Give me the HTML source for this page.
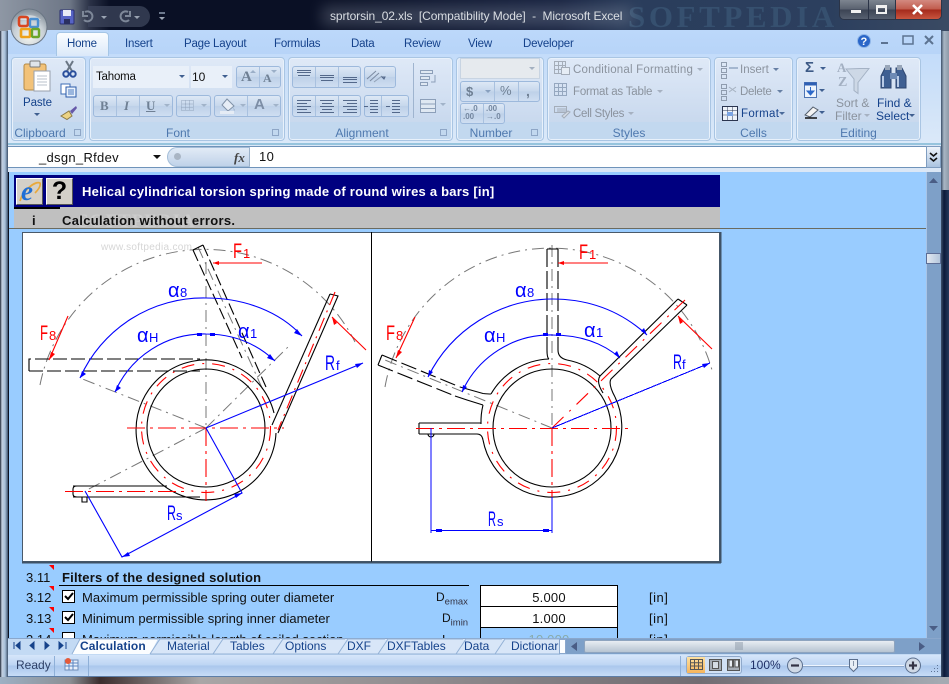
<!DOCTYPE html>
<html><head><meta charset="utf-8"><style>
html,body{margin:0;padding:0;background:#1a2233}
#w{position:relative;width:949px;height:684px;overflow:hidden;font-family:"Liberation Sans",sans-serif;font-size:12px;color:#15428b;background:#0b1122}
.a{position:absolute}
.t{position:absolute;white-space:nowrap;line-height:14px}
.g{position:absolute;top:57px;height:84px;border:1px solid #a9c5e3;border-radius:4px;box-sizing:border-box;background:linear-gradient(#dfe9f7,#c9d9ee 78%,#c2d8ef 78%,#c2d8ef);box-shadow:inset 0 0 0 1px #e8f1fb}
.gl{position:absolute;top:126px;color:#4e78ae;font-size:12px;text-align:center;line-height:14px}
.b{position:absolute;box-sizing:border-box;border:1px solid #9db9dc;border-radius:3px;background:linear-gradient(#dde8f6,#c6d7ec 50%,#bdd0e8 50%,#cfdef1)}
.dlg{position:absolute;width:7px;height:7px;border:1px solid #8ea6c6;box-sizing:border-box;top:129px}
.sty{position:absolute;font-size:11.5px;color:#8b939e;line-height:14px;white-space:nowrap}
.tab{position:absolute;top:37px;font-size:11.5px;color:#15428b;line-height:14px;letter-spacing:-.2px}
.st{position:absolute;top:639px;color:#15428b;font-size:12px;line-height:14px}
.n{position:absolute;font-size:13px;color:#111;line-height:15px;white-space:nowrap}
</style></head><body><div id="w">

<!-- title bar -->
<div class="a" style="left:0;top:0;width:949px;height:31px;background:linear-gradient(90deg,#8e97a4 0,#6d7686 70px,#2a3146 90px,#0a1025 110px,#0a1025 330px,#172240 560px,#2a3d5c 640px,#2c3f5e 830px,#3a4a63 950px)"></div>
<div class="a" style="left:628px;top:0;width:212px;height:30px;font:bold 31px/34px 'Liberation Serif',serif;color:#36506f;letter-spacing:3.6px;white-space:nowrap;overflow:hidden">SOFTPEDIA</div>
<div class="a" style="left:88px;top:6px;width:62px;height:21px;background:#3d465c;border-radius:0 11px 11px 0;opacity:.75"></div>
<div class="a" style="left:322px;top:6px;width:310px;height:20px;background:#a9b3c1;filter:blur(7px);opacity:.28"></div>
<div class="t" style="left:330px;top:9px;color:#d9dde2;font-size:12px;letter-spacing:-.1px">sprtorsin_02.xls&nbsp; [Compatibility Mode]&nbsp; -&nbsp; Microsoft Excel</div>
<!-- QAT -->
<svg class="a" style="left:58px;top:8px" width="110" height="18"><rect x="2" y="2" width="14" height="14" rx="1" fill="#5663c4" stroke="#2a2f70"/><rect x="5" y="2" width="8" height="6" fill="#e6e9f5"/><rect x="6" y="11" width="6" height="5" fill="#2a2f60"/><path d="M27 4 a5 5 0 1 1 -1 8 M25 3v5h5" stroke="#7d8798" stroke-width="2" fill="none"/><path d="M43 8l3 3 3-3z" fill="#9aa3b2"/><path d="M70 4 a5 5 0 1 0 1 8 M72 3v5h-5" stroke="#7d8798" stroke-width="2" fill="none"/><path d="M76 8l3 3 3-3zM101 9l3 3 3-3z" fill="#9aa3b2"/><path d="M101 5h6" stroke="#cfe0f5"/></svg>
<!-- win buttons -->
<div class="a" style="left:839px;top:0;width:103px;height:20px;border:1px solid #2b3447;border-top:0;border-radius:0 0 5px 5px;box-sizing:border-box;background:linear-gradient(#7d8590,#58606e 50%,#3b4353 50%,#566070);overflow:hidden">
 <div class="a" style="left:55px;top:0;width:47px;height:19px;background:linear-gradient(#d38a80,#c05a4b 50%,#a3281a 50%,#c9553f)"></div>
 <div class="a" style="left:28px;top:0;width:1px;height:19px;background:#2b3447"></div>
 <div class="a" style="left:55px;top:0;width:1px;height:19px;background:#2b3447"></div>
 <div class="a" style="left:11px;top:10px;width:10px;height:3px;background:#f0f0f0"></div>
 <div class="a" style="left:36px;top:5px;width:11px;height:9px;border:2px solid #f0f0f0;border-top-width:3px;box-sizing:border-box"></div>
 <svg class="a" style="left:71px;top:4px" width="14" height="11"><path d="M2 1l9 9M11 1l-9 9" stroke="#fff" stroke-width="2.6"/></svg>
</div>

<!-- frame -->
<div class="a" style="left:0;top:31px;width:8px;height:653px;background:linear-gradient(90deg,#1a2233,#c3d0e0 2px,#a8c0da 5px,#3c506a 8px)"></div>
<div class="a" style="left:941px;top:31px;width:8px;height:160px;background:linear-gradient(90deg,#3c506a,#a8b6c4 3px,#8d99a8 8px)"></div>
<div class="a" style="left:941px;top:190px;width:8px;height:494px;background:linear-gradient(90deg,#3c506a,#0c1a3a 3px,#25395c 8px)"></div>
<div class="a" style="left:0;top:677px;width:949px;height:7px;background:linear-gradient(90deg,#9db0c4,#8b8f94 70px,#3b2d2d 100px,#a9a6a6 200px,#716c72 700px,#a4aab2 940px)"></div>

<!-- tab row -->
<div class="a" style="left:8px;top:30px;width:933px;height:25px;background:linear-gradient(#bcd8fa,#b7d4f8)"></div>
<div class="a" style="left:8px;top:54px;width:933px;height:91px;background:linear-gradient(#c3dcfa,#d1e3f8 60%,#dbe9f9 100%);border-bottom:2px solid #96c4dd;box-sizing:border-box"></div>
<div class="a" style="left:56px;top:32px;width:53px;height:24px;background:linear-gradient(#fbfdff,#dbe9f9);border:1px solid #a5c6e6;border-bottom:0;border-radius:4px 4px 0 0;box-sizing:border-box"></div>
<div class="tab" style="left:67px">Home</div><div class="tab" style="left:125px">Insert</div><div class="tab" style="left:184px">Page Layout</div><div class="tab" style="left:274px">Formulas</div><div class="tab" style="left:351px">Data</div><div class="tab" style="left:404px">Review</div><div class="tab" style="left:468px">View</div><div class="tab" style="left:523px">Developer</div>
<svg class="a" style="left:856px;top:33px" width="90" height="16"><circle cx="8" cy="8" r="6.5" fill="#2a66c8" stroke="#8fb6e8"/><text x="4.5" y="12" font-size="11" font-weight="bold" fill="#fff" font-family="Liberation Sans">?</text><rect x="25" y="9" width="7" height="2" fill="#5c7391"/><rect x="47" y="3" width="10" height="8" fill="none" stroke="#5c7391" stroke-width="1.5"/><path d="M69 3l8 8M77 3l-8 8" stroke="#5c7391" stroke-width="2"/></svg>

<!-- office button -->
<svg class="a" style="left:9px;top:6px" width="40" height="42"><defs><radialGradient id="ob" cx=".5" cy=".75" r=".7"><stop offset="0" stop-color="#f5f6f0"/><stop offset=".6" stop-color="#c8d0d6"/><stop offset="1" stop-color="#8a949e"/></radialGradient></defs><circle cx="20" cy="21" r="18" fill="url(#ob)" stroke="#6a7684"/><path d="M8 14a14 10 0 0 1 24 0" fill="#fff" opacity=".45"/><rect x="10" y="11" width="9" height="9" rx="2" fill="none" stroke="#d9451f" stroke-width="2.6"/><rect x="21" y="13" width="8" height="8" rx="1" fill="none" stroke="#4a8fd1" stroke-width="2.4"/><rect x="12" y="23" width="9" height="8" rx="1" fill="none" stroke="#eea21a" stroke-width="2.6"/><rect x="23" y="23" width="7" height="8" rx="1" fill="none" stroke="#6aa52a" stroke-width="2.4"/></svg>

<!-- groups -->
<div class="g" style="left:11px;width:75px"></div>
<div class="g" style="left:89px;width:196px"></div>
<div class="g" style="left:288px;width:165px"></div>
<div class="g" style="left:456px;width:88px"></div>
<div class="g" style="left:547px;width:164px"></div>
<div class="g" style="left:714px;width:79px"></div>
<div class="g" style="left:796px;width:125px"></div>
<div class="gl" style="left:14px;width:52px">Clipboard</div>
<div class="gl" style="left:89px;width:178px">Font</div>
<div class="gl" style="left:288px;width:148px">Alignment</div>
<div class="gl" style="left:456px;width:70px">Number</div>
<div class="gl" style="left:547px;width:164px">Styles</div>
<div class="gl" style="left:714px;width:79px">Cells</div>
<div class="gl" style="left:796px;width:125px">Editing</div>
<div class="dlg" style="left:74px"></div><div class="dlg" style="left:272px"></div><div class="dlg" style="left:440px"></div><div class="dlg" style="left:531px"></div>

<!-- clipboard -->
<svg class="a" style="left:22px;top:60px" width="30" height="34"><rect x="2" y="4" width="22" height="26" rx="2" fill="#f2c279" stroke="#b58a45"/><rect x="8" y="1" width="10" height="6" rx="1" fill="#dfe4ea" stroke="#7a7a7a"/><rect x="12" y="11" width="16" height="20" fill="#fff" stroke="#98a0ac"/><path d="M15 16h10M15 19h10M15 22h10M15 25h10" stroke="#b9c0cb"/></svg>
<div class="t" style="left:23px;top:96px;color:#15428b;font-size:11.5px;letter-spacing:-.1px">Paste</div>
<svg class="a" style="left:33px;top:112px" width="8" height="6"><path d="M1 1h6l-3 3z" fill="#3f5f90"/></svg>
<svg class="a" style="left:62px;top:60px" width="16" height="18"><path d="M4 1l6 10M11 1l-6 10" stroke="#6b7785" stroke-width="2"/><circle cx="4" cy="14" r="2.7" fill="none" stroke="#2a4f9c" stroke-width="2"/><circle cx="11" cy="14" r="2.7" fill="none" stroke="#2a4f9c" stroke-width="2"/></svg>
<svg class="a" style="left:60px;top:83px" width="18" height="15"><rect x="1" y="1" width="9" height="10" fill="#fff" stroke="#3c6cb4"/><rect x="6" y="4" width="10" height="10" fill="#eaf2fc" stroke="#2a5aa8"/><path d="M8 7h6M8 9h6M8 11h6" stroke="#4a7ac0"/></svg>
<svg class="a" style="left:60px;top:105px" width="18" height="16"><path d="M1 11l8-5 3 5-5 3.500z" fill="#ecd383" stroke="#8b7a46"/><path d="M10 6l6-5 1 2-5 6z" fill="#6658a8"/></svg>

<!-- font -->
<div class="a" style="left:93px;top:66px;width:96px;height:22px;background:#e9f0f9"></div>
<div class="a" style="left:191px;top:66px;width:41px;height:22px;background:#e9f0f9"></div>
<div class="t" style="left:96px;top:70px;color:#111;font-size:11.5px;letter-spacing:-.2px">Tahoma</div>
<div class="t" style="left:192px;top:70px;color:#111;font-size:12px">10</div>
<svg class="a" style="left:178px;top:74px" width="54" height="6"><path d="M1 1h6l-3 3z" fill="#3f5f90"/><path d="M44 1h6l-3 3z" fill="#3f5f90"/></svg>
<div class="b" style="left:236px;top:66px;width:45px;height:22px"></div>
<div class="a" style="left:259px;top:67px;width:1px;height:20px;background:#a9c1df"></div>
<div class="t" style="left:241px;top:69px;font:bold 15px/16px 'Liberation Serif',serif;color:#6f8094">A</div><div class="t" style="left:263px;top:71px;font:bold 12px/14px 'Liberation Serif',serif;color:#6f8094">A</div>
<svg class="a" style="left:250px;top:69px" width="28" height="6"><path d="M0 4l3-3 3 3z" fill="#9bafc8"/><path d="M21 1h6l-3 3z" fill="#9bafc8"/></svg>
<div class="b" style="left:93px;top:95px;width:80px;height:22px"></div>
<div class="a" style="left:116px;top:96px;width:1px;height:20px;background:#a9c1df"></div><div class="a" style="left:139px;top:96px;width:1px;height:20px;background:#a9c1df"></div>
<div class="t" style="left:100px;top:98px;font:bold 13px/15px 'Liberation Serif',serif;color:#6f8094">B</div>
<div class="t" style="left:124px;top:98px;font:bold italic 13px/15px 'Liberation Serif',serif;color:#6f8094">I</div>
<div class="t" style="left:146px;top:98px;font:bold 13px/15px 'Liberation Serif',serif;color:#6f8094;text-decoration:underline">U</div>
<div class="b" style="left:176px;top:95px;width:35px;height:22px"></div>
<svg class="a" style="left:181px;top:100px" width="16" height="12"><path d="M.5.5h12v10h-12zM4.500.5v10M8.500.5v10M.5 4h12M.5 7.500h12" fill="none" stroke="#93a5bd" stroke-dasharray="1 1"/></svg>
<div class="b" style="left:214px;top:95px;width:67px;height:22px"></div>
<div class="a" style="left:247px;top:96px;width:1px;height:20px;background:#a9c1df"></div>
<svg class="a" style="left:219px;top:98px" width="18" height="17"><path d="M8 1l7 7-6 5-6-6z" fill="#e6edf6" stroke="#8092a8"/><path d="M14 9l2 3-1 1z" fill="#9fb3cc"/><rect x="1" y="13" width="14" height="3" fill="#e5ecf5"/></svg>
<div class="t" style="left:254px;top:97px;font:bold 15px/16px 'Liberation Sans',sans-serif;color:#7d8ea6">A</div>
<svg class="a" style="left:164px;top:104px" width="116" height="5"><path d="M0 0h6l-3 3z" fill="#a1b3c9"/><path d="M37 0h6l-3 3z" fill="#a1b3c9"/><path d="M76 0h6l-3 3z" fill="#a1b3c9"/><path d="M109 0h6l-3 3z" fill="#a1b3c9"/></svg>

<!-- alignment -->
<div class="b" style="left:292px;top:66px;width:69px;height:22px"></div>
<div class="b" style="left:292px;top:95px;width:69px;height:22px"></div>
<div class="b" style="left:364px;top:66px;width:32px;height:22px"></div>
<div class="b" style="left:364px;top:95px;width:45px;height:22px"></div>
<svg class="a" style="left:292px;top:66px" width="125" height="52" stroke="#53688a" fill="none">
<path d="M23.500 1v20M46.500 1v20M23.500 30v20M46.500 30v20M89.500 30v20" stroke="#a9c1df"/>
<path d="M5 4.500h14M5 6.500h14M6 9.500h12M28 9.500h14M28 11.500h14M29 14.500h12M51 11.500h14M51 13.500h14M51 16.500h14"/>
<path d="M5 34.500h14M5 37.500h10M5 40.500h14M5 43.500h10M5 46.500h14M28 34.500h14M30 37.500h10M28 40.500h14M30 43.500h10M28 46.500h14M51 34.500h14M55 37.500h10M51 40.500h14M55 43.500h10M51 46.500h14"/>
<path d="M78 34.500h8M78 37.500h8M78 40.500h8M78 43.500h8M78 46.500h8M72 40.500h4M100 34.500h8M100 37.500h8M100 40.500h8M100 43.500h8M100 46.500h8M94 40.500h4" stroke="#53688a"/>
<path d="M75 13l9-8M78 15l9-8" stroke="#7c8ba2"/><path d="M82 16l8-6" stroke="#91a1b6"/><path d="M90 11l3 0-1 2z" fill="#a1b3c9"/></svg>
<div class="a" style="left:413px;top:63px;width:1px;height:55px;background:#9fb4cf"></div>
<svg class="a" style="left:420px;top:68px" width="18" height="46" fill="none" stroke="#8c9fb9"><rect x=".5" y="2.500" width="12" height="3" fill="#dfe8f2"/><rect x=".5" y="8.500" width="9" height="3" fill="#dfe8f2"/><rect x=".5" y="14.500" width="7" height="3" fill="#dfe8f2"/><path d="M15 7v7h-4"/><rect x=".5" y="31.500" width="15" height="13" fill="#dfe8f2"/><path d="M.5 36h15M.5 40.500h15"/></svg>
<svg class="a" style="left:439px;top:102px" width="8" height="6"><path d="M1 1h6l-3 3z" fill="#a1b3c9"/></svg>

<!-- number -->
<div class="a" style="left:460px;top:58px;width:80px;height:21px;background:#e6eaee;border:1px solid #c8d4e2;box-sizing:border-box"></div>
<svg class="a" style="left:528px;top:66px" width="8" height="6"><path d="M1 1h6l-3 3z" fill="#a3b0c0"/></svg>
<div class="b" style="left:460px;top:81px;width:80px;height:21px"></div>
<div class="a" style="left:494px;top:82px;width:1px;height:19px;background:#a9c1df"></div><div class="a" style="left:518px;top:82px;width:1px;height:19px;background:#a9c1df"></div>
<div class="t" style="left:466px;top:84px;font:bold 13px/15px 'Liberation Sans',sans-serif;color:#6f8094">$</div>
<svg class="a" style="left:484px;top:89px" width="8" height="6"><path d="M1 1h6l-3 3z" fill="#88a0bf"/></svg>
<div class="t" style="left:500px;top:84px;font-size:13px;color:#6f8094">%</div>
<div class="t" style="left:526px;top:83px;font:bold 14px/16px 'Liberation Sans',sans-serif;color:#6f8094">,</div>
<div class="b" style="left:460px;top:103px;width:45px;height:21px"></div>
<div class="a" style="left:483px;top:104px;width:1px;height:19px;background:#a9c1df"></div>
<div class="t" style="left:463px;top:105px;font:bold 8px/8px 'Liberation Sans',sans-serif;color:#7487a0;width:20px">←.0<br>.00</div>
<div class="t" style="left:486px;top:105px;font:bold 8px/8px 'Liberation Sans',sans-serif;color:#7487a0;width:20px">.00<br>→.0</div>

<!-- styles -->
<svg class="a" style="left:554px;top:61px" width="18" height="60" fill="none" stroke="#a4adb9"><path d="M.5.500h11v12h-11zM.5 4.500h11M.5 8.500h11M4.500.500v12M8.500.500v12"/><rect x="7.500" y="6.500" width="8" height="7" fill="#e6edf5"/><path d="M.5 22.500h12v12h-12zM.5 26.500h12M.5 30.500h12M4.500 22.500v12M8.500 22.500v12" stroke="#95a7bf"/><path d="M.5 45.500h12v6h-12zM3 48h9M3 50h9" stroke="#a4adb9"/><path d="M8 55l6-5 2 1-6 6z" fill="#d6dde6"/></svg>
<div class="sty" style="left:573px;top:63px;letter-spacing:.2px">Conditional Formatting</div>
<div class="sty" style="left:573px;top:85px;letter-spacing:-.2px">Format as Table</div>
<div class="sty" style="left:573px;top:107px;letter-spacing:-.3px">Cell Styles</div>
<svg class="a" style="left:696px;top:67px" width="8" height="5"><path d="M1 1h6l-3 3z" fill="#a6b1c1"/></svg><svg class="a" style="left:656px;top:89px" width="8" height="5"><path d="M1 1h6l-3 3z" fill="#a6b1c1"/></svg><svg class="a" style="left:627px;top:111px" width="8" height="5"><path d="M1 1h6l-3 3z" fill="#a6b1c1"/></svg>

<!-- cells -->
<svg class="a" style="left:721px;top:62px" width="18" height="60" fill="none" stroke="#8f9cae"><path d="M.5.500h5v4h-5zM.5 6.500h5v4h-5zM.5 12.500h5v4h-5z"/><path d="M8 6h9" stroke="#6d87aa"/><path d="M.5 22.500h5v4h-5zM.5 28.500h5v4h-5zM.5 34.500h5v4h-5z"/><path d="M8 25l7 5M15 25l-7 5" stroke="#a5b1c0"/><rect x="1.500" y="44.500" width="15" height="14" fill="#eef3fa" stroke="#2a3550"/><path d="M1.500 48.500h15M1.500 53h15M6.500 44.500v14M11.500 44.500v14" stroke="#2a3550" stroke-dasharray="1 1"/><rect x="6" y="50" width="6" height="4" fill="#7ba4e2" stroke="none"/></svg>
<div class="sty" style="left:740px;top:63px">Insert</div><div class="sty" style="left:740px;top:85px;letter-spacing:-.3px">Delete</div><div class="sty" style="left:741px;top:107px;color:#15428b;letter-spacing:.3px">Format</div>
<svg class="a" style="left:772px;top:67px" width="10" height="6"><path d="M1 1h6l-3 3z" fill="#667fa4"/></svg>
<svg class="a" style="left:776px;top:89px" width="10" height="6"><path d="M1 1h6l-3 3z" fill="#667fa4"/></svg>
<svg class="a" style="left:778px;top:111px" width="10" height="6"><path d="M1 1h6l-3 3z" fill="#4a6a9a"/></svg>

<!-- editing -->
<div class="t" style="left:805px;top:59px;font:bold 15px/18px 'Liberation Sans',sans-serif;color:#3d5a86">Σ</div>
<svg class="a" style="left:804px;top:82px" width="14" height="17"><rect x=".5" y=".5" width="12" height="15" fill="#eef4fc" stroke="#4d74b4"/><rect x=".5" y=".5" width="12" height="3" fill="#2e5fb4"/><path d="M6.500 5v5M3 9h7l-3.500 4z" fill="#2d69c9" stroke="#2d69c9"/></svg>
<svg class="a" style="left:804px;top:106px" width="16" height="14"><path d="M1 9l8-8 5 3-8 7z" fill="#f4f4f4" stroke="#55606e"/><path d="M1 12h12" stroke="#111" stroke-width="1.500"/></svg>
<svg class="a" style="left:819px;top:66px" width="10" height="52"><path d="M1 1h6l-3 3z" fill="#3f5f90"/><path d="M0 23h6l-3 3z" fill="#3f5f90"/><path d="M0 45h6l-3 3z" fill="#3f5f90"/></svg>
<svg class="a" style="left:836px;top:61px" width="34" height="34"><path d="M10 8l14-.5 9 0-11 14v11l-4-3V18z" fill="#cdd8e6" stroke="#a4b2c4"/></svg>
<div class="t" style="left:837px;top:61px;font:bold 13px/14px 'Liberation Serif',serif;color:#a3b0c2">A</div><div class="t" style="left:838px;top:75px;font:bold 14px/16px 'Liberation Serif',serif;color:#a3b0c2">Z</div>
<svg class="a" style="left:879px;top:62px" width="30" height="30"><path d="M2 14l4-8h6v20H2zM17 6h6l4 8v12H17z" fill="#3e5f92" stroke="#2d4670"/><path d="M6 3h5v5H6zM18 3h5v5h-5z" fill="#98a6b9"/><rect x="11" y="11" width="7" height="6" fill="#6d8ab5"/><path d="M4 14v11M19 14v11" stroke="#b9cbe6" stroke-width="2"/></svg>
<div class="t" style="left:836px;top:96px;color:#8b939e;font-size:12px">Sort &amp;</div>
<div class="t" style="left:835px;top:109px;color:#8b939e;font-size:12px">Filter</div>
<div class="t" style="left:877px;top:96px;color:#15428b;font-size:12px">Find &amp;</div>
<div class="t" style="left:876px;top:109px;color:#15428b;font-size:12px">Select</div>
<svg class="a" style="left:864px;top:114px" width="52" height="5"><path d="M0 0h6l-3 3z" fill="#a6b1c1"/><path d="M45 0h6l-3 3z" fill="#3f5f90"/></svg>

<!-- formula bar -->
<div class="a" style="left:8px;top:145px;width:933px;height:27px;background:#dbe7f6"></div>
<div class="a" style="left:8px;top:146px;width:918px;height:22px;background:#fff;border-top:1px solid #6f93ba;border-bottom:1px solid #6f93ba;box-sizing:border-box"></div>
<div class="t" style="left:39px;top:151px;color:#111;font-size:13px;letter-spacing:.3px">_dsgn_Rfdev</div>
<svg class="a" style="left:153px;top:155px" width="9" height="6"><path d="M0 0h8l-4 4z" fill="#111"/></svg>
<div class="a" style="left:167px;top:147px;width:83px;height:20px;border-radius:10px 0 0 10px;background:linear-gradient(#e2ebf6,#bfd2e9);border:1px solid #a3bdd8;border-right:1px solid #9bb1c9;box-sizing:border-box"></div>
<div class="a" style="left:174px;top:153px;width:7px;height:7px;border-radius:50%;background:#a9b5c4"></div>
<div class="t" style="left:234px;top:150px;font:italic bold 13px/15px 'Liberation Serif',serif;color:#444">fx</div>
<div class="t" style="left:259px;top:150px;color:#111;font-size:13px;letter-spacing:.4px">10</div>
<div class="a" style="left:926px;top:146px;width:15px;height:22px;background:linear-gradient(#eef3fa,#aac3e0);border:1px solid #7f9dc0;box-sizing:border-box"></div>
<svg class="a" style="left:928px;top:151px" width="11" height="13"><path d="M2 2l3.500 3 3.500-3M2 7l3.500 3 3.500-3" stroke="#111" stroke-width="1.600" fill="none"/></svg>

<!-- sheet -->
<div class="a" style="left:9px;top:172px;width:917px;height:466px;background:#99ccff;overflow:hidden">
 <div class="a" style="left:4px;top:3px;width:707px;height:32px;background:#000080"></div>
 <div class="a" style="left:4px;top:35px;width:47px;height:2px;background:#000"></div>
 <div class="a" style="left:51px;top:35px;width:660px;height:21px;background:#c0c0c0"></div>
 <div class="a" style="left:4px;top:37px;width:47px;height:19px;background:#c0c0c0"></div>
 <div class="a" style="left:0;top:56px;width:917px;height:1px;background:#6b6b60"></div>
</div>
<div class="a" style="left:9px;top:172px;width:5px;height:56px;background:#99ccff"></div>
<div class="a" style="left:16px;top:178px;width:27px;height:27px;background:#d4d0c8;border:1px solid;border-color:#fff #555 #555 #fff;box-sizing:border-box"></div>
<div class="a" style="left:46px;top:178px;width:27px;height:27px;background:#d4d0c8;border:1px solid;border-color:#fff #555 #555 #fff;box-sizing:border-box;font:bold 25px/25px 'Liberation Sans',sans-serif;color:#000;text-align:center">?</div>
<svg class="a" style="left:18px;top:180px" width="24" height="24"><path d="M2 21C5 10 17 1 22 3c1 3-2 7-5 10" stroke="#e8a93c" stroke-width="1.700" fill="none"/><text x="3" y="20" font-family="Liberation Serif" font-style="italic" font-weight="bold" font-size="27" fill="#1f6fd6">e</text></svg>
<div class="t" style="left:82px;top:184px;color:#fff;font:bold 13px/15px 'Liberation Sans',sans-serif;letter-spacing:.23px">Helical cylindrical torsion spring made of round wires a bars [in]</div>
<div class="t" style="left:32px;top:213px;color:#111;font:bold 13px/15px 'Liberation Sans',sans-serif">i</div>
<div class="t" style="left:78px;top:213px;color:#d8d8d8;font:bold 19px/18px 'Liberation Serif',serif;letter-spacing:1px;opacity:.5">SOFTPEDIA</div>
<div class="t" style="left:62px;top:213px;color:#111;font:bold 13px/15px 'Liberation Sans',sans-serif;letter-spacing:.32px">Calculation without errors.</div>

<!-- drawing -->
<svg class="a" style="left:21px;top:231px" width="701" height="333" viewBox="21 231 701 333" font-family="Liberation Sans,sans-serif" shape-rendering="crispEdges">
<rect x="22.500" y="232.500" width="697" height="329" fill="#fff" stroke="#4a5a6a" stroke-width="1"/>
<path d="M371.500 232v330" stroke="#000"/>
<path d="M22 562.500h699M720.500 232v331" stroke="#3f5266" stroke-width="2" fill="none"/>
<g shape-rendering="auto">
<text x="101" y="250" font-size="10" fill="#d6d6d6" letter-spacing=".3">www.softpedia.com</text>
<!-- LEFT gray -->
<g fill="none" stroke="#777" stroke-width="1" stroke-dasharray="12 5 2 5">
<path d="M40 385A168 168 0 0 1 355 342"/>
<path d="M206 262V428"/>
<path d="M206 428L80 378"/>
<path d="M206 428L85 491"/>
<path d="M206 428L290 345"/>
<path d="M198 247L263 390"/>
</g>
<!-- LEFT black -->
<g fill="none" stroke="#000" stroke-width="1.100">
<circle cx="206" cy="428" r="59"/>
<path d="M274 413A70 70 0 1 0 276 433"/>
<path d="M73 486H167M73 497H200M77 486Q73 486 73 489V494Q73 497 77 497"/>
<path d="M82 497v5h5v-5"/>
<path d="M193 250L203 245"/>
<path d="M330 294L338 296L278 433"/>
<path d="M330 294L272 425"/>
<path d="M193 250L242 358M203 245L266 387" stroke-dasharray="12 4"/>
<path d="M29 371V359H200M29 371H200" stroke-dasharray="14 4"/>
</g>
<!-- LEFT red -->
<g fill="none" stroke="#f00" stroke-width="1.100">
<path d="M127 428H284M206 428V501M65 491.500H188" stroke-dasharray="18 5 3 5"/>
<circle cx="206" cy="428" r="64.500" stroke-dasharray="13 8 2 8"/>
<path d="M335 292L278 430" stroke-dasharray="14 6 2 6"/>
<path d="M213 263H262M68 316L49 360M332 317L366 350"/>
</g>
<path d="M213 263l6-2v4zM49 360l2-8 4 2zM332 317l5 6-3 2z" fill="#f00"/>
<!-- LEFT blue -->
<g fill="none" stroke="#00f" stroke-width="1.100">
<path d="M80 378A135 135 0 0 1 206 298C245 298 280 312 302 336"/>
<path d="M115 392A97 97 0 0 1 206 334C235 334 258 345 275 361"/>
<path d="M206 428L363 363M206 428L242 493L122 557L85 491"/>
</g>
<path d="M302 336l-8-3 3-4zM275 361l-8-3 3-4zM242 493l-8 1 2 4zM122 557l8-1-2-4zM363 363l-8 1 2 4zM80 378l2-7 4 3zM115 392l2-7 4 3z" fill="#00f"/>
<rect x="197" y="333" width="5" height="3" fill="#00f"/><rect x="210" y="333" width="5" height="3" fill="#00f"/>

<!-- RIGHT gray -->
<g fill="none" stroke="#777" stroke-width="1" stroke-dasharray="12 5 2 5">
<path d="M385 387A168 168 0 0 1 712 370"/>
<path d="M552 245V428"/>
<path d="M552 428L380 358"/>
</g>
<!-- RIGHT black -->
<g fill="none" stroke="#000" stroke-width="1.100">
<circle cx="552" cy="428" r="59"/>
<path d="M483 440A70 70 0 1 0 615 397"/>
<path d="M600 376A70 70 0 0 0 567 360"/>
<path d="M549 359A70 70 0 0 0 491 394"/>
<path d="M483 405A70 70 0 0 0 481 424"/>
<path d="M419 423H481M419 434H477Q482 434 483 440M419 423V434"/>
<path d="M428 434a3 3 0 0 0 6 0"/>
<path d="M678 299L687 305M678 299L600 376Q596 382 603 393M687 305L611 379Q608 384 615 397"/>
<path d="M382 355L378 365M382 355L460 387M378 365L455 396" stroke-dasharray="16 5"/>
<path d="M460 387L483 393.500Q488 394 491 394M455 396L467 400L483 405"/>
<path d="M547 249V350M558 249V350" stroke-dasharray="18 4"/>
<path d="M547 249H558M547 350Q547 358 549 359M558 350Q558 358 567 360"/>
</g>
<!-- RIGHT red -->
<g fill="none" stroke="#f00" stroke-width="1.100">
<path d="M416 428.500H630M552 428V497" stroke-dasharray="18 5 3 5"/>
<circle cx="552" cy="428" r="64.500" stroke-dasharray="13 8 2 8"/>
<path d="M552 428L685 300" stroke-dasharray="16 8 2 8"/>
<path d="M558 263H608M415 317L396 358M678 316L712 349"/>
</g>
<path d="M558 263l6-2v4zM396 358l2-8 4 2zM678 316l5 6-3 2z" fill="#f00"/>
<!-- RIGHT blue -->
<g fill="none" stroke="#00f" stroke-width="1.100">
<path d="M428 377A140 140 0 0 1 552 299C590 299 622 312 647 335"/>
<path d="M462 392A97 97 0 0 1 552 335C580 335 603 343 620 358"/>
<path d="M552 428L710 363M431 428V533M552 497V533M431 530.500H552" shape-rendering="crispEdges"/>
</g>
<path d="M647 335l-6-4 3-3zM620 358l-6-4 3-3zM710 363l-8 1 2 4zM428 377l1-7 4 2zM462 392l1-7 4 2z" fill="#00f"/>
<rect x="436" y="529" width="6" height="3" fill="#00f"/><rect x="543" y="529" width="6" height="3" fill="#00f"/><rect x="543" y="333" width="5" height="3" fill="#00f"/><rect x="556" y="333" width="5" height="3" fill="#00f"/>

<!-- labels -->
<g fill="#f00" font-size="21">
<text x="233" y="258" textLength="9" lengthAdjust="spacingAndGlyphs">F</text><text x="243" y="258" font-size="13">1</text>
<text x="40" y="340" textLength="8" lengthAdjust="spacingAndGlyphs">F</text><text x="49" y="340" font-size="13">8</text>
<text x="579" y="259" textLength="9" lengthAdjust="spacingAndGlyphs">F</text><text x="589" y="259" font-size="13">1</text>
<text x="386" y="340" textLength="9" lengthAdjust="spacingAndGlyphs">F</text><text x="396" y="340" font-size="13">8</text>
</g>
<g fill="#00f" font-size="20">
<text x="168" y="297">α</text><text x="180" y="297" font-size="13">8</text>
<text x="137" y="342">α</text><text x="149" y="342" font-size="13">H</text>
<text x="238" y="338">α</text><text x="250" y="338" font-size="13">1</text>
<text x="325" y="370" font-size="21" textLength="10" lengthAdjust="spacingAndGlyphs">R</text><text x="336" y="370" font-size="13">f</text>
<text x="167" y="520" font-size="21" textLength="9" lengthAdjust="spacingAndGlyphs">R</text><text x="176" y="520" font-size="13">s</text>
<text x="515" y="297">α</text><text x="527" y="297" font-size="13">8</text>
<text x="484" y="342">α</text><text x="496" y="342" font-size="13">H</text>
<text x="584" y="337">α</text><text x="596" y="337" font-size="13">1</text>
<text x="673" y="369" font-size="21" textLength="9" lengthAdjust="spacingAndGlyphs">R</text><text x="682" y="369" font-size="13">f</text>
<text x="488" y="526" font-size="21" textLength="8" lengthAdjust="spacingAndGlyphs">R</text><text x="497" y="526" font-size="13">s</text>
</g>
</g>
</svg>

<!-- rows -->
<div class="a" style="left:9px;top:564px;width:917px;height:74px;overflow:hidden">
 <div class="n" style="left:17px;top:6px">3.11</div>
 <div class="n" style="left:53px;top:6px;font-weight:bold;letter-spacing:.2px">Filters of the designed solution</div>
 <div class="a" style="left:50px;top:21px;width:410px;height:1px;background:#000"></div>
 <div class="n" style="left:17px;top:26px">3.12</div>
 <div class="n" style="left:73px;top:26px">Maximum permissible spring outer diameter</div>
 <div class="n" style="left:17px;top:47px">3.13</div>
 <div class="n" style="left:73px;top:47px">Minimum permissible spring inner diameter</div>
 <div class="n" style="left:17px;top:68px">3.14</div>
 <div class="n" style="left:73px;top:68px">Maximum permissible length of coiled section</div>
 <svg class="a" style="left:53px;top:26px" width="14" height="60"><rect x=".5" y=".5" width="12" height="12" fill="#fff" stroke="#000"/><path d="M3 6l3 3 5-6" stroke="#000" stroke-width="2" fill="none"/><rect x=".5" y="21.500" width="12" height="12" fill="#fff" stroke="#000"/><path d="M3 27l3 3 5-6" stroke="#000" stroke-width="2" fill="none"/><rect x=".5" y="42.500" width="12" height="12" fill="#fff" stroke="#000"/></svg>
 <svg class="a" style="left:39px;top:1px" width="8" height="70"><path d="M1 0h5v5zM1 21h5v5zM1 42h5v5zM1 63h5v5z" fill="#f00"/></svg>
 <div class="a" style="left:471px;top:21px;width:138px;height:64px;background:#fff;border:1px solid #000;box-sizing:border-box"></div>
 <div class="a" style="left:471px;top:42px;width:138px;height:1px;background:#000"></div>
 <div class="a" style="left:471px;top:63px;width:138px;height:1px;background:#000"></div>
 <div class="a" style="left:472px;top:64px;width:136px;height:10px;background:#99ccff"></div>
 <div class="n" style="left:472px;top:26px;width:136px;text-align:center;letter-spacing:.2px">5.000</div>
 <div class="n" style="left:472px;top:47px;width:136px;text-align:center;letter-spacing:.2px">1.000</div>
 <div class="n" style="left:472px;top:68px;width:136px;text-align:center;letter-spacing:.2px;color:#8aa">10.000</div>
 <div class="n" style="left:640px;top:26px;letter-spacing:.5px">[in]</div><div class="n" style="left:640px;top:47px;letter-spacing:.5px">[in]</div><div class="n" style="left:640px;top:68px;letter-spacing:.5px">[in]</div>
 <div class="n" style="left:427px;top:26px;color:#111;font-size:12px">D<sub style="font-size:9.500px;line-height:0;color:#334">emax</sub></div>
 <div class="n" style="left:433px;top:47px;color:#111;font-size:12px">D<sub style="font-size:9.500px;line-height:0;color:#334">imin</sub></div>
 <div class="n" style="left:433px;top:68px;color:#111">L</div>
</div>

<!-- v scroll -->
<div class="a" style="left:926px;top:172px;width:15px;height:466px;background:#7ea0c8;border-left:1px solid #a9c4e6;box-sizing:border-box"></div>
<svg class="a" style="left:928px;top:177px" width="12" height="8"><path d="M1 6h9l-4.500-5z" fill="#4a5d85"/></svg>
<div class="a" style="left:926px;top:253px;width:15px;height:11px;background:linear-gradient(90deg,#e2e8f0,#b4c6dc);border:1px solid #5d6e96;box-sizing:border-box"></div>
<svg class="a" style="left:928px;top:625px" width="12" height="8"><path d="M1 1h9l-4.500 5z" fill="#4a5d85"/></svg>

<!-- sheet tabs -->
<div class="a" style="left:8px;top:638px;width:933px;height:17px;background:#c3daf4;border-top:1px solid #8aa7cc;box-sizing:border-box"></div>
<svg class="a" style="left:12px;top:640px" width="58" height="12"><path d="M2 2v7M8 2L4 5.500 8 9zM22 2L18 5.500 22 9zM33 2l4 3.500-4 3.500zM47 2l4 3.500-4 3.500zM54 2v7" stroke="#15428b" fill="#15428b"/></svg>
<svg class="a" style="left:70px;top:638px" width="495" height="17"><path d="M80 16L90 1H490V16z" fill="#d8e6f8"/><path d="M2 16L10 1H88L80 16z" fill="#fbfdff"/><path d="M2 16L10 1H88M80 16L90 1H150M143 16L153 1H210M203 16L213 1H275M268 16L278 1H315M308 16L318 1H393M386 16L396 1H432M425 16L435 1H490M80 16H490" fill="none" stroke="#93b1d6"/></svg>
<div class="st" style="left:80px;font-weight:bold;color:#15428b;letter-spacing:.1px">Calculation</div>
<div class="st" style="left:167px">Material</div><div class="st" style="left:230px">Tables</div><div class="st" style="left:285px">Options</div><div class="st" style="left:347px">DXF</div><div class="st" style="left:387px">DXFTables</div><div class="st" style="left:464px">Data</div><div class="st" style="left:511px">Dictionar</div>
<div class="a" style="left:559px;top:639px;width:7px;height:15px;background:#fdfeff;border:1px solid #8aa7cc;box-sizing:border-box"></div>
<div class="a" style="left:566px;top:639px;width:375px;height:15px;background:#7ea0c8"></div>
<svg class="a" style="left:570px;top:642px" width="360" height="10"><path d="M7 0v9L1 4.500zM349 0v9l6-4.500z" fill="#4a5d85"/></svg>
<div class="a" style="left:584px;top:640px;width:311px;height:13px;background:linear-gradient(#e8edf3,#cfd8e2 50%,#b7c4d2);border:1px solid #8ea4bf;border-radius:2px;box-sizing:border-box"></div>
<svg class="a" style="left:735px;top:642px" width="10" height="8"><path d="M1 0v8M3 0v8M5 0v8M7 0v8" stroke="#8d9aa9"/></svg>

<!-- status bar -->
<div class="a" style="left:8px;top:655px;width:933px;height:22px;background:linear-gradient(#d6e6fa,#bcd4f3 50%,#a9c6ec 50%,#c7dcf6);border-bottom:1px solid #5d7ea8;box-sizing:border-box"></div>
<div class="t" style="left:16px;top:658px;color:#2d3f66;font-size:12px">Ready</div>
<div class="a" style="left:54px;top:656px;width:1px;height:20px;background:#8fb0d8"></div>
<div class="a" style="left:88px;top:656px;width:1px;height:20px;background:#8fb0d8"></div>
<svg class="a" style="left:63px;top:657px" width="17" height="15"><rect x="2" y="3" width="13" height="10" fill="#e9f0fb" stroke="#6f8db8"/><path d="M2 6h13M2 9h13M6 3v10M10 3v10" stroke="#5c86c2"/><circle cx="5" cy="4" r="3" fill="#e55a3a"/></svg>
<div class="a" style="left:680px;top:656px;width:1px;height:20px;background:#8fb0d8"></div>
<div class="a" style="left:686px;top:656px;width:56px;height:18px;background:#d1e1f5;border:1px solid #8fa9cb;border-radius:3px;box-sizing:border-box"></div>
<div class="a" style="left:687px;top:657px;width:18px;height:16px;background:linear-gradient(#fde0a0,#f6b45c)"></div>
<svg class="a" style="left:690px;top:659px" width="50" height="13" fill="none" stroke="#555"><path d="M.5.500h12v10H.5zM4.500.500v10M8.500.500v10M.5 3.800h12M.5 7h12"/><rect x="19.500" y=".5" width="12" height="11" fill="#a5acb5"/><rect x="22.500" y="2.500" width="6" height="7" fill="#d5dce4"/><rect x="37.500" y=".5" width="12" height="11" fill="#a5acb5"/><path d="M43.500.5v8" /><rect x="39" y="1" width="3.500" height="7" fill="#e8edf3"/><rect x="45" y="1" width="3.500" height="7" fill="#e8edf3"/></svg>
<div class="t" style="left:750px;top:658px;color:#1f2f66;font-size:12px">100%</div>
<svg class="a" style="left:786px;top:656px" width="140" height="19"><path d="M17 9.500h101" stroke="#eef5ff"/><path d="M17 10.500h101" stroke="#8fa9cb"/><circle cx="9" cy="9.500" r="7.500" fill="#cfd9e6" stroke="#5b6f8e"/><path d="M5 9.500h8" stroke="#334" stroke-width="2.200"/><circle cx="127" cy="9.500" r="7.500" fill="#cfd9e6" stroke="#5b6f8e"/><path d="M123 9.500h8M127 5.500v8" stroke="#334" stroke-width="2.200"/><path d="M63.500 3.500h8v8l-4 4-4-4z" fill="#e8eef6" stroke="#5b6f8e"/><path d="M67.500 5v5" stroke="#8a98ab"/></svg>
<svg class="a" style="left:929px;top:664px" width="10" height="10"><path d="M8 1h1v1H8zM5 4h1v1H5zM8 4h1v1H8zM2 7h1v1H2zM5 7h1v1H5zM8 7h1v1H8z" fill="#5d7395"/></svg>
</div></body></html>
